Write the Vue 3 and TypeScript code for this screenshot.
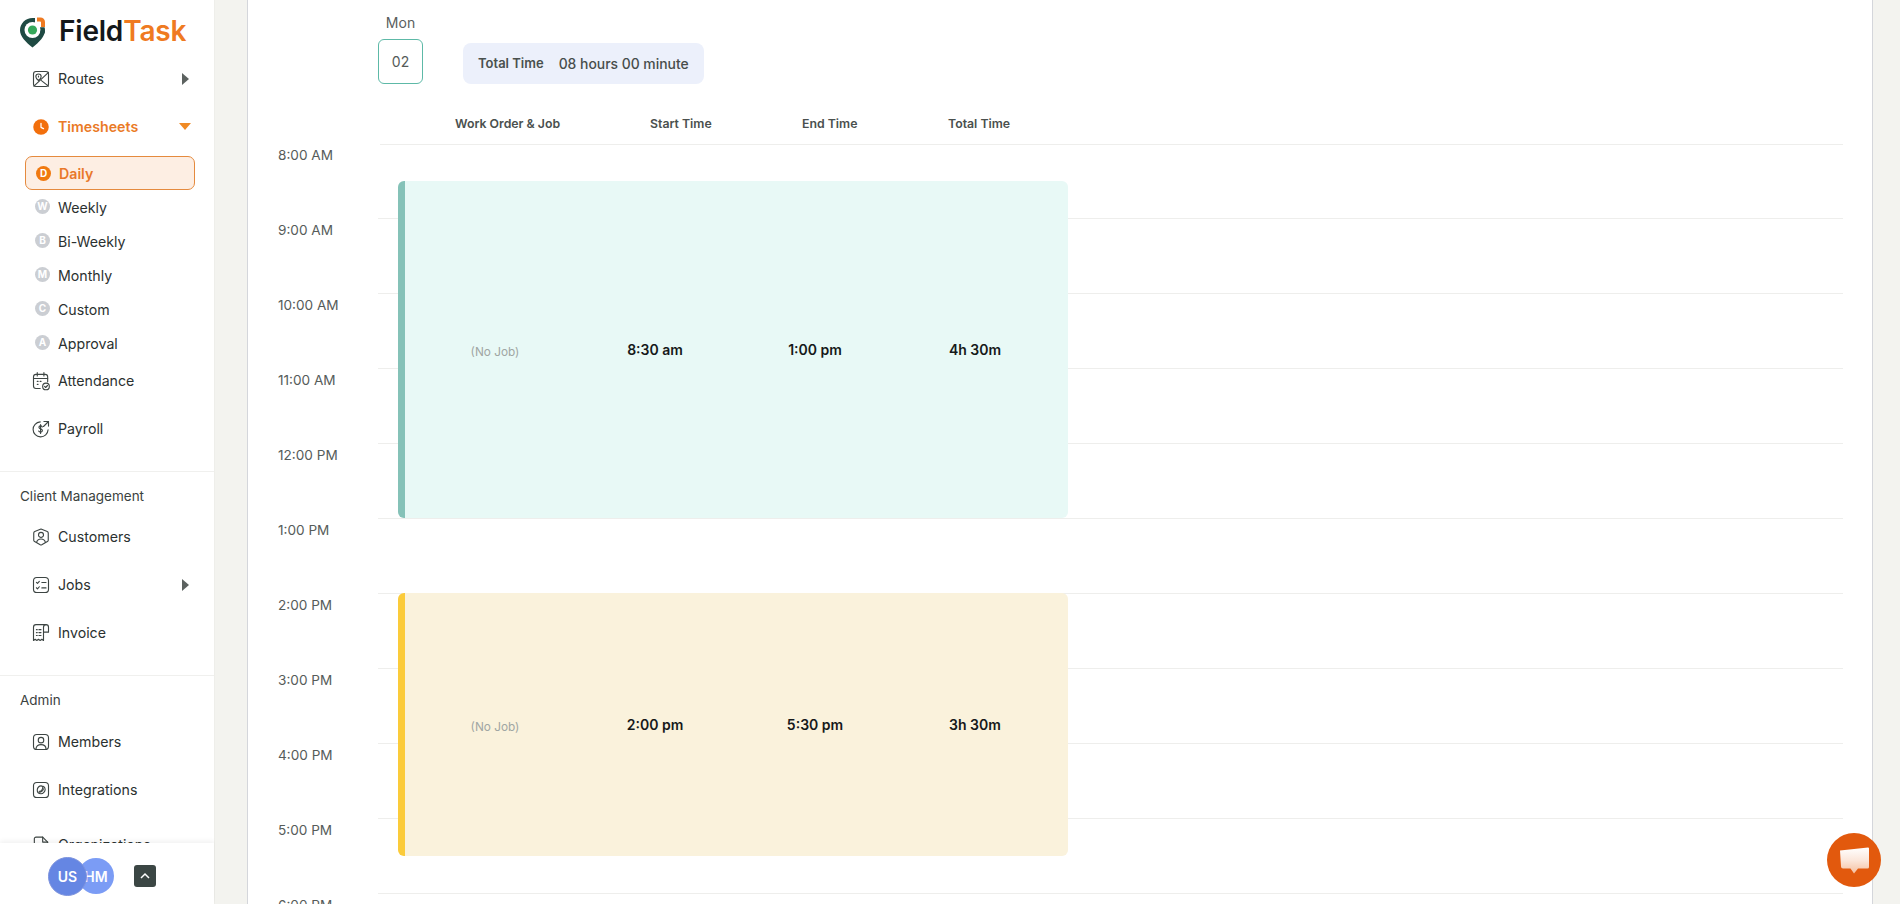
<script setup lang="ts">
type NavItem = { label: string; icon: string; arrow?: boolean };

const icons: Record<string, string[]> = {
  routes: [
    "M6 3h12a3 3 0 0 1 3 3v12a3 3 0 0 1-3 3H6a3 3 0 0 1-3-3V6a3 3 0 0 1 3-3z",
    "M3.500 20.500 21 4",
    "M12.500 14l8.500 6.500",
    "M9 6a3.200 3.200 0 0 1 3.200 3.200c0 1.800-2 3.600-3.200 4.600-1.200-1-3.200-2.800-3.200-4.600A3.200 3.200 0 0 1 9 6z",
    "M9 8.500v1",
  ],
  attendance: [
    "M11 21H6a3 3 0 0 1-3-3V7a3 3 0 0 1 3-3h11a3 3 0 0 1 3 3v6",
    "M3 9h17",
    "M7.500 2v4M15.500 2v4",
    "M7.500 12.500h1M11 12.500h1M7.500 16h1",
    "M18 14.500a4 4 0 1 1 0 8 4 4 0 0 1 0-8z",
    "M16.300 18.500l1.300 1.300 2.200-2.400",
  ],
  payroll: [
    "M11 3.500A9 9 0 1 0 20.500 13",
    "M15.500 3H21v5.500M21 3l-6 6",
    "M13.500 9.500c-.5-.8-1.200-1.200-2-1.200-1.200 0-2 .7-2 1.700 0 2.400 4.200 1.300 4.200 3.900 0 1-.9 1.800-2.200 1.800-1 0-1.900-.5-2.300-1.300",
    "M11.500 6.800v10.600",
  ],
  customers: [
    "M12 2.500l7.500 3a2 2 0 0 1 1.200 1.800v8.500a2 2 0 0 1-1 1.700L12.900 21.400a2 2 0 0 1-1.800 0L4.300 17.500a2 2 0 0 1-1-1.700V7.300a2 2 0 0 1 1.200-1.800z",
    "M12 6.500a3 3 0 1 1 0 6 3 3 0 0 1 0-6z",
    "M6.800 18.300c.6-2.600 2.600-3.900 5.200-3.900s4.600 1.300 5.200 3.900",
  ],
  jobs: [
    "M7 3h10a4 4 0 0 1 4 4v10a4 4 0 0 1-4 4H7a4 4 0 0 1-4-4V7a4 4 0 0 1 4-4z",
    "M6.500 8.800l1.300 1.300 2.200-2.500",
    "M6.500 15.300l1.300 1.300 2.200-2.500",
    "M13 9h5M13 15.500h5",
  ],
  invoice: [
    "M15 5v16l-2-1.500-2 1.500-2-1.500-2 1.500-2-1.500L3 21V5a3 3 0 0 1 3-3h12",
    "M15 5a3 3 0 0 1 6 0v6h-6",
    "M6.500 8h1M9.500 8h2.500M6.500 11.500h1M9.500 11.500h2.500M6.500 15h1M9.500 15h2.500",
  ],
  members: [
    "M7 3h10a4 4 0 0 1 4 4v10a4 4 0 0 1-4 4H7a4 4 0 0 1-4-4V7a4 4 0 0 1 4-4z",
    "M12 6.500a3.300 3.300 0 1 1 0 6.600 3.300 3.300 0 0 1 0-6.600z",
    "M6 20.500c0-3.500 2.600-5.400 6-5.400s6 1.900 6 5.400",
  ],
  integrations: [
    "M7 3h10a4 4 0 0 1 4 4v10a4 4 0 0 1-4 4H7a4 4 0 0 1-4-4V7a4 4 0 0 1 4-4z",
    "M14.500 7.500a4 4 0 0 1 2.500 3.500c0 3-2.500 5.500-5 5.500S7.500 15 7.500 12s2.500-5 4.500-5c1.800 0 2.500 1.500 2 3-.7 2-2.500 4-4 3.500",
    "M9.500 14.500c2.500.5 5-1.500 5.500-4",
  ],
  organizations: [
    "M14 2.500H6a2 2 0 0 0-2 2v15a2 2 0 0 0 2 2h12a2 2 0 0 0 2-2V8.500z",
    "M14 2.500V8.500h6",
    "M8 13h8M8 17h5",
  ],
};

const routes: NavItem = { label: "Routes", icon: "routes", arrow: true };
const subItems = [
  { letter: "W", label: "Weekly" },
  { letter: "B", label: "Bi-Weekly" },
  { letter: "M", label: "Monthly" },
  { letter: "C", label: "Custom" },
  { letter: "A", label: "Approval" },
];
const afterSub: NavItem[] = [
  { label: "Attendance", icon: "attendance" },
  { label: "Payroll", icon: "payroll" },
];
const sections: { title: string; items: NavItem[] }[] = [
  {
    title: "Client Management",
    items: [
      { label: "Customers", icon: "customers" },
      { label: "Jobs", icon: "jobs", arrow: true },
      { label: "Invoice", icon: "invoice" },
    ],
  },
  {
    title: "Admin",
    items: [
      { label: "Members", icon: "members" },
      { label: "Integrations", icon: "integrations" },
      { label: "Organizations", icon: "organizations" },
    ],
  },
];

const hours = [
  "8:00 AM", "9:00 AM", "10:00 AM", "11:00 AM", "12:00 PM", "1:00 PM",
  "2:00 PM", "3:00 PM", "4:00 PM", "5:00 PM", "6:00 PM",
];
const columns = ["Work Order & Job", "Start Time", "End Time", "Total Time"];
const entries = [
  { kind: "teal", start: "8:30 am", end: "1:00 pm", total: "4h 30m" },
  { kind: "yellow", start: "2:00 pm", end: "5:30 pm", total: "3h 30m" },
];
</script>

<template>
  <div class="app">
    <aside class="sidebar">
      <div class="logo">
        <svg class="logo-mark" width="26" height="31" viewBox="0 0 26 31">
          <path d="M12.500 1C5.600 1 0 6.500 0 13.300c0 6 5.800 12 12.500 17.200C19.200 25.300 25 19.300 25 13.300c0-1-.1-2-.4-3H15V1z" fill="#1f4a43" />
          <circle cx="12.500" cy="13" r="8" fill="#fff" />
          <circle cx="12.500" cy="13" r="4.600" fill="#35a85a" />
          <path d="M17 .5h3.500A4.500 4.500 0 0 1 25 5v5h-4V5.500a1 1 0 0 0-1-1h-3z" fill="#ef7a21" />
          <path d="M20.500 13.500H25c0 1-.2 2-.6 3H20z" fill="#1f4a43" />
        </svg>
        <span class="logo-text">Field<span class="logo-accent">Task</span></span>
      </div>

      <nav class="nav">
        <div class="nav-group">
          <a class="nav-item">
            <svg class="nav-icon" viewBox="0 0 24 24"><path v-for="d in icons[routes.icon]" :key="d" :d="d" /></svg>
            <span>{{ routes.label }}</span>
            <i class="arrow-right"></i>
          </a>
          <a class="nav-item nav-item-active">
            <svg class="nav-icon" viewBox="0 0 24 24">
              <circle cx="12" cy="12" r="9.300" class="clock-face" />
              <path d="M12 7.500V12.500L15 14" class="clock-hand" />
            </svg>
            <span>Timesheets</span>
            <i class="arrow-down"></i>
          </a>
          <div class="sub-list">
            <a class="sub-item sub-item-active"><span class="badge badge-active">D</span><span>Daily</span></a>
            <a v-for="s in subItems" :key="s.label" class="sub-item">
              <span class="badge">{{ s.letter }}</span><span>{{ s.label }}</span>
            </a>
          </div>
          <a v-for="item in afterSub" :key="item.label" class="nav-item">
            <svg class="nav-icon" viewBox="0 0 24 24"><path v-for="d in icons[item.icon]" :key="d" :d="d" /></svg>
            <span>{{ item.label }}</span>
          </a>
        </div>

        <section v-for="sec in sections" :key="sec.title" class="nav-section">
          <h3 class="section-title">{{ sec.title }}</h3>
          <div class="nav-group">
            <a v-for="item in sec.items" :key="item.label" class="nav-item">
              <svg class="nav-icon" viewBox="0 0 24 24"><path v-for="d in icons[item.icon]" :key="d" :d="d" /></svg>
              <span>{{ item.label }}</span>
              <i v-if="item.arrow" class="arrow-right"></i>
            </a>
          </div>
        </section>
      </nav>

      <footer class="side-footer">
        <div class="avatars">
          <span class="avatar avatar-us">US</span>
          <span class="avatar avatar-hm">HM</span>
        </div>
        <button class="collapse-btn" type="button" aria-label="Expand">
          <svg width="12" height="12" viewBox="0 0 12 12"><path d="M2 8l4-4 4 4" /></svg>
        </button>
      </footer>
    </aside>

    <main class="main">
      <div class="panel">
        <div class="day-bar">
          <div class="day">
            <span class="day-name">Mon</span>
            <span class="day-num">02</span>
          </div>
          <div class="total-badge">
            <span class="total-label">Total Time</span>
            <span class="total-value">08 hours 00 minute</span>
          </div>
        </div>

        <div class="col-head">
          <span v-for="c in columns" :key="c">{{ c }}</span>
        </div>

        <div class="time-grid">
          <div v-for="h in hours" :key="h" class="hour-row">
            <span class="hour-label">{{ h }}</span>
            <span class="hour-line"></span>
          </div>
          <div v-for="e in entries" :key="e.kind" class="entry" :class="'entry-' + e.kind">
            <span class="cell cell-muted">(No Job)</span>
            <span class="cell">{{ e.start }}</span>
            <span class="cell">{{ e.end }}</span>
            <span class="cell">{{ e.total }}</span>
          </div>
        </div>
      </div>

      <button class="chat" type="button" aria-label="Chat">
        <svg width="34" height="30" viewBox="0 0 34 30">
          <defs>
            <linearGradient id="bubble" x1="0" y1="0" x2="0" y2="1">
              <stop offset="0" stop-color="#ffffff" />
              <stop offset="0.500" stop-color="#fbe6da" />
              <stop offset="1" stop-color="#f5bf9f" />
            </linearGradient>
          </defs>
          <path d="M3 5.500 31 2.500a1 1 0 0 1 1 1V22a1.500 1.500 0 0 1-1.500 1.500H21l-4 5-3.500-5H6a2 2 0 0 1-2-2z" fill="url(#bubble)" />
        </svg>
      </button>
    </main>
  </div>
</template>

<style>
html,
body {
  margin: 0;
  overflow: hidden;
  background: #f3f3ef;
}
</style>

<style scoped>
.app {
  display: flex;
  width: 1900px;
  height: 904px;
  overflow: hidden;
  font-family: Inter, "Noto Sans", sans-serif;
  color: #2b3130;
}
.sidebar {
  flex: none;
  width: 215px;
  height: 904px;
  display: flex;
  flex-direction: column;
  background: #fff;
  border-right: 1px solid #eeeeea;
  box-sizing: border-box;
}
.logo {
  flex: none;
  height: 59px;
  padding: 0 0 0 20px;
  display: flex;
  align-items: flex-start;
  gap: 13px;
  box-sizing: border-box;
}
.logo-mark {
  margin-top: 17px;
  flex: none;
}
.logo-text {
  margin-top: 14px;
  font-size: 28px;
  line-height: 34px;
  font-weight: 600;
  color: #14181a;
  letter-spacing: -0.2px;
}
.logo-accent {
  color: #ef7a21;
}
.nav {
  flex: 1;
  min-height: 0;
  overflow: hidden;
}
.nav-group {
  display: flex;
  flex-direction: column;
  gap: 8px;
}
.nav-item {
  position: relative;
  height: 40px;
  display: flex;
  align-items: center;
  gap: 7px;
  padding-left: 31px;
  font-size: 14.200px;
  color: #2b3130;
}
.nav-item span {
  margin-top: -1px;
}
.nav-section:last-child .nav-item:last-child {
  margin-top: 7px;
}
.nav-icon {
  flex: none;
  width: 20px;
  height: 20px;
  fill: none;
  stroke: #3d4543;
  stroke-width: 1.350;
  stroke-linecap: round;
  stroke-linejoin: round;
}
.nav-item-active {
  color: #ea7a26;
  font-weight: 600;
}
.clock-face {
  fill: #f26f0c;
  stroke: none;
}
.clock-hand {
  stroke: #fff;
  stroke-width: 1.500;
  fill: none;
}
.arrow-right {
  position: absolute;
  left: 182px;
  top: 14px;
  width: 0;
  height: 0;
  border-left: 7px solid #5c6260;
  border-top: 6px solid transparent;
  border-bottom: 6px solid transparent;
}
.arrow-down {
  position: absolute;
  left: 179px;
  top: 16px;
  width: 0;
  height: 0;
  border-top: 7px solid #f08a24;
  border-left: 6px solid transparent;
  border-right: 6px solid transparent;
}
.sub-list {
  margin: 1px 0 -8px;
  display: flex;
  flex-direction: column;
}
.sub-item {
  height: 34px;
  display: flex;
  align-items: center;
  gap: 8px;
  padding-left: 35px;
  font-size: 14.200px;
  color: #2b3130;
}
.sub-item span:last-child {
  margin-top: -1px;
}
.sub-item-active {
  margin: 0 19px 1px 25px;
  padding-left: 10px;
  gap: 8px;
  box-sizing: border-box;
  border: 1px solid #e58a3e;
  border-radius: 7px;
  background: #fdeee3;
  color: #e9782a;
  font-weight: 600;
}
.sub-item-active span:last-child {
  margin-top: 0;
}
.badge {
  flex: none;
  width: 15px;
  height: 15px;
  margin-top: -3px;
  border-radius: 50%;
  background: #cbced3;
  color: #fff;
  font-size: 10px;
  font-weight: 700;
  line-height: 15px;
  text-align: center;
}
.badge-active {
  margin-top: 0;
  background: #f0790f;
}
.nav-section {
  margin-top: 22px;
  border-top: 1px solid #f0f0ee;
  padding-top: 14px;
}
.section-title {
  margin: 0 0 11px 20px;
  height: 20px;
  font-size: 13.500px;
  line-height: 20px;
  font-weight: 400;
  color: #3b4240;
}
.nav-section:last-child .section-title {
  margin-bottom: 12px;
}
.side-footer {
  flex: none;
  position: relative;
  height: 61px;
  box-sizing: border-box;
  display: flex;
  align-items: center;
  background: #fff;
  box-shadow: 0 -2px 5px rgba(0, 0, 0, 0.06);
  padding: 5px 0 0 48px;
  gap: 20px;
}
.avatars {
  display: flex;
  align-items: center;
}
.avatar {
  display: flex;
  align-items: center;
  justify-content: center;
  border-radius: 50%;
  color: #fff;
  font-weight: 600;
  font-size: 14px;
}
.avatar-us {
  position: relative;
  z-index: 1;
  width: 39px;
  height: 39px;
  background: #6586e3;
  border: 1px solid #7d93dd;
  box-sizing: border-box;
}
.avatar-hm {
  width: 36px;
  height: 36px;
  margin-left: -9px;
  background: #7b9cf5;
}
.collapse-btn {
  width: 22px;
  height: 22px;
  padding: 0;
  border: none;
  border-radius: 3px;
  background: #3b4644;
  display: flex;
  align-items: center;
  justify-content: center;
}
.collapse-btn svg {
  fill: none;
  stroke: #fff;
  stroke-width: 1.500;
}
.main {
  flex: 1;
  min-width: 0;
  position: relative;
  padding: 0 27px 0 32px;
  background: #f3f3ef;
}
.panel {
  height: 904px;
  box-sizing: border-box;
  overflow: hidden;
  background: #fff;
  border-left: 1px solid #d4d6db;
  border-right: 1px solid #d4d6db;
  padding: 0 29px 0 30px;
}
.day-bar {
  display: flex;
  align-items: flex-end;
  padding: 14px 0 0 100px;
}
.day {
  width: 45px;
  display: flex;
  flex-direction: column;
  align-items: center;
  gap: 7px;
}
.day-name {
  height: 18px;
  line-height: 18px;
  font-size: 14px;
  color: #5a605e;
}
.day-num {
  width: 45px;
  height: 45px;
  box-sizing: border-box;
  border: 1px solid #5db9a7;
  border-radius: 6px;
  display: flex;
  align-items: center;
  justify-content: center;
  font-size: 14px;
  color: #555b59;
}
.total-badge {
  margin-left: 40px;
  height: 41px;
  padding: 0 15px 0 15px;
  display: flex;
  align-items: center;
  gap: 15px;
  background: #ecf0fb;
  border-radius: 8px;
  box-sizing: border-box;
}
.total-label {
  margin-top: -2px;
  font-size: 13px;
  font-weight: 600;
  color: #4a504e;
}
.total-value {
  margin-top: 1px;
  font-size: 13.900px;
  font-weight: 500;
  color: #474d4b;
}
.col-head {
  margin: 0 0 0 102px;
  padding: 31px 0 0 75px;
  height: 61px;
  box-sizing: border-box;
  display: grid;
  grid-template-columns: 195px 152px 146px auto;
  align-items: start;
  border-bottom: 1px solid #eeeeec;
  font-size: 12.300px;
  line-height: 18px;
  font-weight: 600;
  color: #4a504e;
}
.time-grid {
  position: relative;
}
.hour-row {
  height: 75px;
  display: flex;
  box-sizing: border-box;
}
.hour-row:first-child {
  height: 74px;
}
.hour-label {
  width: 100px;
  flex: none;
  height: 20px;
  padding-top: 1px;
  line-height: 20px;
  font-size: 13.600px;
  color: #565c5a;
}
.hour-row:first-child .hour-label {
  padding-top: 0;
}
.hour-line {
  flex: 1;
  border-bottom: 1px solid #eeeeec;
}
.entry {
  position: absolute;
  left: 120px;
  width: 670px;
  box-sizing: border-box;
  display: grid;
  grid-template-columns: repeat(4, 160px);
  align-items: center;
  padding-left: 10px;
  border-left: 7px solid;
  border-radius: 6px;
  text-align: center;
  font-size: 14px;
  font-weight: 600;
  color: #16191a;
}
.entry-teal {
  top: 36px;
  height: 337px;
  background: #e8f9f6;
  border-left-color: #85c2b8;
}
.entry-yellow {
  top: 448px;
  height: 263px;
  background: #faf2dc;
  border-left-color: #fbcb3a;
}
.cell-muted {
  margin-top: 5px;
  font-size: 11.800px;
  font-weight: 400;
  color: #a0a6a3;
}
.chat {
  position: absolute;
  left: 1612px;
  top: 833px;
  width: 54px;
  height: 54px;
  padding: 0;
  border: none;
  border-radius: 50%;
  background: #e2590d;
  display: flex;
  align-items: center;
  justify-content: center;
}
</style>
